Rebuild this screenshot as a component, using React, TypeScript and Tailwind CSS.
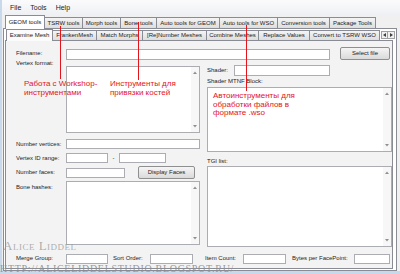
import React from 'react';

const outerTabs = [
  { label: 'GEOM tools', w: 'w-[40px]', active: true },
  { label: 'TSRW tools', w: 'w-[38px]' },
  { label: 'Morph tools', w: 'w-[38px]' },
  { label: 'Bone tools', w: 'w-[36px]' },
  { label: 'Auto tools for GEOM', w: 'w-[63px]' },
  { label: 'Auto tools for WSO', w: 'w-[58px]' },
  { label: 'Conversion tools', w: 'w-[52px]' },
  { label: 'Package Tools', w: 'w-[46px]' },
];

const innerTabs = [
  { label: 'Examine Mesh', w: 'w-[47px]', active: true },
  { label: 'FrankenMesh', w: 'w-[44px]' },
  { label: 'Match Morphs', w: 'w-[46px]' },
  { label: '[Re]Number Meshes', w: 'w-[64px]' },
  { label: 'Combine Meshes', w: 'w-[52px]' },
  { label: 'Replace Values', w: 'w-[51px]' },
  { label: 'Convert to TSRW WSO', w: 'w-[70px]' },
];

const Box = ({ className }: { className: string }) => (
  <div className={`border border-[#abadb3] bg-white ${className}`} />
);

// multiline text box with its vertical scrollbar
const Area = ({ className }: { className: string }) => (
  <div className={`border border-[#abadb3] bg-white flex justify-end ${className}`}>
    <div className="w-[8px] bg-[#f7f7f7] flex flex-col justify-between items-center py-[4px]">
      <svg width="4" height="3" viewBox="0 0 4 3">
        <path d="M0 3L2 0.5L4 3Z" fill="#909090" />
      </svg>
      <svg width="4" height="3" viewBox="0 0 4 3">
        <path d="M0 0L2 2.5L4 0Z" fill="#909090" />
      </svg>
    </div>
  </div>
);

const Btn = ({ children, className }: { children: React.ReactNode; className: string }) => (
  <div
    className={`border border-[#8e8f8f] rounded-[2px] bg-linear-to-b from-[#f5f5f5] to-[#dadada] flex items-center justify-center ${className}`}
  >
    {children}
  </div>
);

const Label = ({ children, className = 'w-[50px]' }: { children: React.ReactNode; className?: string }) => (
  <div className={`shrink-0 whitespace-nowrap ${className}`}>{children}</div>
);

export default function App() {
  return (
    <div className="relative w-[400px] h-[274px] overflow-hidden bg-[#c9d9ec] font-['Liberation_Sans',Arial,sans-serif] text-[6px] leading-[7px] text-[#1c1c1c]">
      <div className="ml-[2px] w-[398px] h-[271px] bg-[#f0f0f0]">
        {/* menu */}
        <div className="h-[15px] flex items-center gap-[9px] pl-[8px] text-[7px] bg-linear-to-b from-[#fbfbfc] to-[#eef0f3]">
          <span>File</span>
          <span>Tools</span>
          <span>Help</span>
        </div>

        {/* outer tabs */}
        <div className="h-[13px] flex items-end pl-[3px]">
          {outerTabs.map((t) =>
            t.active ? (
              <div
                key={t.label}
                className={`${t.w} h-[14px] -mb-px relative z-10 bg-white border border-b-0 border-[#898c95] flex items-center justify-center`}
              >
                {t.label}
              </div>
            ) : (
              <div
                key={t.label}
                className={`${t.w} h-[11px] bg-linear-to-b from-[#f4f4f4] to-[#dedede] border-t border-r border-[#898c95] flex items-center justify-center whitespace-nowrap`}
              >
                {t.label}
              </div>
            )
          )}
        </div>

        {/* outer panel */}
        <div className="ml-[1px] w-[394px] h-[243px] border border-[#898c95] bg-white">
          {/* inner tabs */}
          <div className="h-[11px] flex items-end pl-[2px]">
            {innerTabs.map((t) =>
              t.active ? (
                <div
                  key={t.label}
                  className={`${t.w} h-[12px] -mb-px relative z-10 bg-[#fbfbfb] border border-b-0 border-[#898c95] flex items-center justify-center whitespace-nowrap`}
                >
                  {t.label}
                </div>
              ) : (
                <div
                  key={t.label}
                  className={`${t.w} h-[10px] bg-linear-to-b from-[#f4f4f4] to-[#dedede] border-t border-r border-[#898c95] flex items-center justify-center whitespace-nowrap`}
                >
                  {t.label}
                </div>
              )
            )}
            <div className="ml-[1px] mb-[1px] flex">
              <div className="w-[7px] h-[8px] border border-[#a0a0a0] bg-[#f0f0f0] flex items-center justify-center">
                <svg width="3" height="4" viewBox="0 0 3 4">
                  <path d="M3 0L0 2L3 4Z" fill="#404040" />
                </svg>
              </div>
              <div className="w-[7px] h-[8px] border border-l-0 border-[#a0a0a0] bg-[#f0f0f0] flex items-center justify-center">
                <svg width="3" height="4" viewBox="0 0 3 4">
                  <path d="M0 0L3 2L0 4Z" fill="#404040" />
                </svg>
              </div>
            </div>
          </div>

          {/* inner panel */}
          <div className="ml-[1px] w-[388px] h-[229px] border border-[#898c95] bg-[#f3f3f3]">
            <div className="mt-[6px] h-[13px] flex items-center pl-[10px]">
              <Label>Filename:</Label>
              <Box className="w-[264px] h-[11px] mt-[2px]" />
              <Btn className="ml-[10px] w-[50px] h-[13px]">Select file</Btn>
            </div>

            <div className="flex pl-[10px]">
              {/* left column */}
              <div className="w-[184px] flex flex-col">
                <div className="flex items-start">
                  <Label>Vertex format:</Label>
                  <Area className="mt-[6px] w-[134px] h-[67px]" />
                </div>
                <div className="mt-[6px] h-[10px] flex items-center">
                  <Label>Number vertices:</Label>
                  <Box className="w-[134px] h-[10px]" />
                </div>
                <div className="mt-[4px] h-[10px] flex items-center">
                  <Label>Vertex ID range:</Label>
                  <Box className="w-[42px] h-[10px]" />
                  <div className="w-[11px] text-center">-</div>
                  <Box className="w-[47px] h-[10px]" />
                </div>
                <div className="mt-[3px] h-[13px] flex items-center">
                  <Label>Number faces:</Label>
                  <Box className="w-[59px] h-[10px]" />
                  <Btn className="ml-[13px] w-[57px] h-[13px]">Display Faces</Btn>
                </div>
                <div className="mt-[2px] flex items-start">
                  <Label className="w-[50px] pt-[3px]">Bone hashes:</Label>
                  <Area className="w-[134px] h-[64px]" />
                </div>
              </div>

              {/* right column */}
              <div className="ml-[7px] w-[185px] flex flex-col">
                <div className="mt-[5px] h-[11px] flex items-center">
                  <Label className="w-[27px]">Shader:</Label>
                  <Box className="w-[96px] h-[11px]" />
                </div>
                <div className="mt-[2px] h-[7px]">Shader MTNF Block:</div>
                <Area className="mt-[2px] w-[185px] h-[65px]" />
                <div className="mt-[6px] h-[7px]">TGI list:</div>
                <Area className="mt-[1px] w-[185px] h-[81px]" />
              </div>
            </div>

            <div className="mt-[6px] h-[11px] flex items-center pl-[10px]">
              <Label>Merge Group:</Label>
              <Box className="w-[42px] h-[10px]" />
              <Label className="ml-[5px] w-[37px]">Sort Order:</Label>
              <Box className="w-[43px] h-[10px]" />
              <Label className="ml-[12px] w-[38px]">Item Count:</Label>
              <Box className="w-[43px] h-[10px]" />
              <Label className="ml-[6px] w-[62px]">Bytes per FacePoint:</Label>
              <Box className="w-[36px] h-[10px]" />
            </div>
          </div>
        </div>
      </div>

      {/* red annotations drawn over the screenshot */}
      <div className="absolute left-[60px] top-[26px] w-px h-[53px] bg-[#e3141c]" />
      <div className="absolute left-[138px] top-[22px] w-px h-[58px] bg-[#e3141c]" />
      <div className="absolute left-[246px] top-[25px] w-px h-[66px] bg-[#e3141c]" />
      <div className="absolute left-[24px] top-[80px] text-[8px] leading-[8.5px] text-[#e3141c] whitespace-nowrap">
        Работа с Workshop-
        <br />
        инструментами
      </div>
      <div className="absolute left-[110px] top-[80px] text-[8px] leading-[8.5px] text-[#e3141c] whitespace-nowrap">
        Инструменты для
        <br />
        привязки костей
      </div>
      <div className="absolute left-[213px] top-[92px] text-[8px] leading-[8.5px] text-[#e3141c] whitespace-nowrap">
        Автоинструменты для
        <br />
        обработки файлов в
        <br />
        формате .wso
      </div>

      {/* watermark */}
      <div className="absolute left-[3px] top-[239px] font-['Liberation_Serif',serif] text-[13px] leading-[14px] [font-variant:small-caps] tracking-[0.5px] text-[#9b9b9b]/80 whitespace-nowrap">
        Alice Liddel
      </div>
      <div className="absolute left-[0px] top-[264px] font-['Liberation_Serif',serif] text-[10px] leading-[10px] uppercase tracking-[0.7px] text-[#8e8e8e]/90 whitespace-nowrap">
        http://aliceliddelstudio.blogspot.ru/
      </div>
    </div>
  );
}
